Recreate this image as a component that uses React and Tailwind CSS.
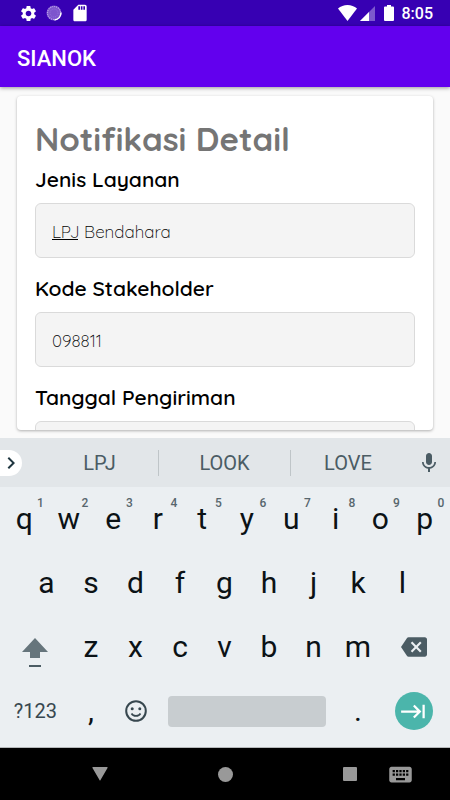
import React from 'react';
import {
  MdSettings,
  MdSdCard,
  MdMic,
  MdChevronRight,
  MdBackspace,
  MdKeyboard,
  MdKeyboardTab
} from 'react-icons/md';

const fields = [
  { id: 'jenis', label: 'Jenis Layanan', value: 'LPJ Bendahara', composing: true },
  { id: 'kode', label: 'Kode Stakeholder', value: '098811' },
  { id: 'tanggal', label: 'Tanggal Pengiriman', value: '' }
];

const topRow = ['q', 'w', 'e', 'r', 't', 'y', 'u', 'i', 'o', 'p'];
const middleRow = ['a', 's', 'd', 'f', 'g', 'h', 'j', 'k', 'l'];
const bottomRow = ['z', 'x', 'c', 'v', 'b', 'n', 'm'];

const StatusBar = () => (
  <div className="flex h-[26px] shrink-0 items-center justify-between bg-[#3700b3] pl-[19px] pr-[17px] text-white">
    <div className="flex items-center gap-2">
      <MdSettings size={19} />
      <svg className="h-4 w-4" viewBox="0 0 16 16" fill="none">
        <circle cx="8" cy="8" r="7.500" fill="#7d55cd" />
        <circle cx="8" cy="8" r="6.500" stroke="#b9a2ea" strokeWidth="1.200" strokeDasharray="1 1" />
        <circle cx="8" cy="8" r="4" stroke="#9673dc" strokeWidth="1" strokeDasharray="1 1" />
        <path d="M15 7.500A7 7 0 0 1 8.500 15" stroke="#fff" strokeWidth="1.400" />
      </svg>
      <MdSdCard size={20} />
    </div>
    <div className="flex items-center">
      <svg className="h-4 w-[19px]" viewBox="0 0 19 16" fill="currentColor">
        <path d="M9.500 16L0 3.600C2.600 1.300 6 0 9.500 0S16.400 1.300 19 3.600z" />
      </svg>
      <svg className="ml-[3px] h-4 w-[15px]" viewBox="0 0 15 16" fill="currentColor">
        <path d="M15 1v15H0z" opacity=".35" />
        <path d="M9 7v9H0z" />
      </svg>
      <svg className="ml-[9px] h-4 w-[10px]" viewBox="0 0 10 16" fill="currentColor">
        <path d="M3 0h4v1.500h2a1 1 0 0 1 1 1V15a1 1 0 0 1-1 1H1a1 1 0 0 1-1-1V2.500a1 1 0 0 1 1-1h2z" />
      </svg>
      <span className="ml-2 pt-[2px] text-[16px] leading-5 font-medium">8:05</span>
    </div>
  </div>
);

const Field = ({ id, label, value, composing }) => (
  <div className="mb-4">
    <label htmlFor={id} className="mb-[10px] block text-[21px] leading-7 font-semibold text-black">
      {label}
    </label>
    <div className="relative">
      <input
        id={id}
        type="text"
        defaultValue={value}
        className="block h-[55px] w-full rounded-md border border-[#dadada] bg-[#f4f4f4] px-4 pt-[2px] text-[17px] font-light text-black outline-none"
      />
      {/* Underline of the word being typed */}
      {composing && <span className="absolute top-9 left-[17px] h-px w-[26px] bg-black" />}
    </div>
  </div>
);

const Key = ({ children, hint }) => (
  <button type="button" className="relative col-span-2 h-16 text-[30px] leading-8 text-[#0b1216]">
    {children}
    {hint && (
      <span className="absolute top-2 right-0 w-3 text-center text-[12px] leading-4 font-medium text-[#57666d]">
        {hint}
      </span>
    )}
  </button>
);

const Keyboard = () => (
  <div className="shrink-0 border-b border-[#b5b8ba] bg-[#ebeff2]">
    {/* Suggestion strip */}
    <div className="flex h-[49px] items-center bg-[#e2e6e9] text-[#4b5c64]">
      <button
        type="button"
        aria-label="More"
        className="flex h-[26px] w-[22px] items-center justify-center rounded-r-full bg-white text-[#1f3640]"
      >
        <MdChevronRight size={24} className="shrink-0" />
      </button>
      <div className="ml-[5px] grid flex-1 grid-cols-[132fr_132fr_122fr] divide-x divide-[#bfc5c8] text-[20px] leading-6">
        <button type="button" className="h-[26px] pl-[14px]">LPJ</button>
        <button type="button" className="h-[26px]">LOOK</button>
        <button type="button" className="h-[26px] pr-2">LOVE</button>
      </div>
      <button type="button" aria-label="Voice input" className="mr-[9px] ml-1">
        <MdMic size={24} />
      </button>
    </div>

    {/* Keys */}
    <div className="grid grid-cols-20 pr-[3px] pb-1 pl-[2px]">
      {topRow.map((letter, index) => (
        <Key key={letter} hint={String((index + 1) % 10)}>
          {letter}
        </Key>
      ))}

      <span />
      {middleRow.map((letter) => (
        <Key key={letter}>{letter}</Key>
      ))}
      <span />

      <button type="button" aria-label="Shift" className="col-span-3 flex h-16 items-center justify-center">
        <svg className="mt-3 h-[30px] w-[26px]" viewBox="0 0 26 30" fill="#66757c">
          <path d="M13 0l13 14h-8v6H8v-6H0z" />
          <path d="M7 27h12v2H7z" fill="#4b5c64" />
        </svg>
      </button>
      {bottomRow.map((letter) => (
        <Key key={letter}>{letter}</Key>
      ))}
      <button type="button" aria-label="Backspace" className="col-span-3 flex h-16 items-center justify-center text-[#4b5c64]">
        <MdBackspace size={26} />
      </button>

      <button type="button" className="col-span-3 h-16 text-[20px] text-[#37474f]">
        ?123
      </button>
      <Key>,</Key>
      <button type="button" aria-label="Emoji" className="col-span-2 flex h-16 items-center justify-center text-[#37474f]">
        <svg className="h-[22px] w-[22px]" viewBox="0 0 22 22" fill="none" stroke="currentColor" strokeWidth="2">
          <circle cx="11" cy="11" r="9.800" />
          <circle cx="7.200" cy="8.700" r="1.500" fill="currentColor" stroke="none" />
          <circle cx="14.800" cy="8.700" r="1.500" fill="currentColor" stroke="none" />
          <path d="M6.500 13.500c1.800 3.200 7.200 3.200 9 0" strokeWidth="1.600" />
        </svg>
      </button>
      <button type="button" aria-label="Space" className="col-span-8 flex h-16 items-center px-[10px]">
        <span className="h-[31px] w-full rounded bg-[#c8cdd0]" />
      </button>
      <Key>.</Key>
      <button type="button" aria-label="Next" className="col-span-3 flex h-16 items-center justify-center">
        <span className="flex h-[38px] w-[38px] items-center justify-center rounded-full bg-[#4bb5ab] text-white">
          <MdKeyboardTab size={27} />
        </span>
      </button>
    </div>
  </div>
);

const NavBar = () => (
  <div className="grid h-[52px] shrink-0 grid-cols-18 items-center bg-black text-[#999999]">
    <button type="button" aria-label="Back" className="col-span-2 col-start-4">
      <svg className="mx-auto h-[14px] w-4" viewBox="0 0 16 14" fill="currentColor">
        <path d="M1 0h14q1 0 .5 1L8.500 13q-.5 1-1 0L.5 1Q0 0 1 0z" />
      </svg>
    </button>
    <button type="button" aria-label="Home" className="col-span-2 col-start-9">
      <span className="mx-auto block h-[15px] w-[15px] rounded-full bg-[#999999]" />
    </button>
    <button type="button" aria-label="Recent apps" className="col-span-2 col-start-14">
      <span className="mx-auto block h-[14px] w-[14px] rounded-[1px] bg-[#999999]" />
    </button>
    <button type="button" aria-label="Switch keyboard" className="col-span-2 col-start-16">
      <MdKeyboard size={27} className="mx-auto" />
    </button>
  </div>
);

const App = () => {
  return (
    <div className="flex h-screen flex-col overflow-hidden bg-[#fafafa] font-['Roboto',sans-serif]">
      <StatusBar />

      {/* App bar */}
      <header className="flex h-[61px] shrink-0 items-center bg-[#6200ee] px-[17px] pt-1 shadow-[0_1px_4px_rgba(0,0,0,0.4)]">
        <h1 className="text-[22px] leading-7 font-medium text-white">SIANOK</h1>
      </header>

      <main className="min-h-0 flex-1 px-[17px] pt-[9px] pb-2">
        <div className="h-full overflow-hidden rounded-sm bg-white px-[18px] pt-[21px] font-['Quicksand','Lato',sans-serif] shadow-[0_1px_3px_rgba(0,0,0,0.3)]">
          <h2 className="mb-1 text-[33px] leading-[44px] font-bold text-[#757575]">Notifikasi Detail</h2>
          {fields.map((field) => (
            <Field key={field.id} {...field} />
          ))}
        </div>
      </main>

      <Keyboard />
      <NavBar />
    </div>
  );
};

export default App;
